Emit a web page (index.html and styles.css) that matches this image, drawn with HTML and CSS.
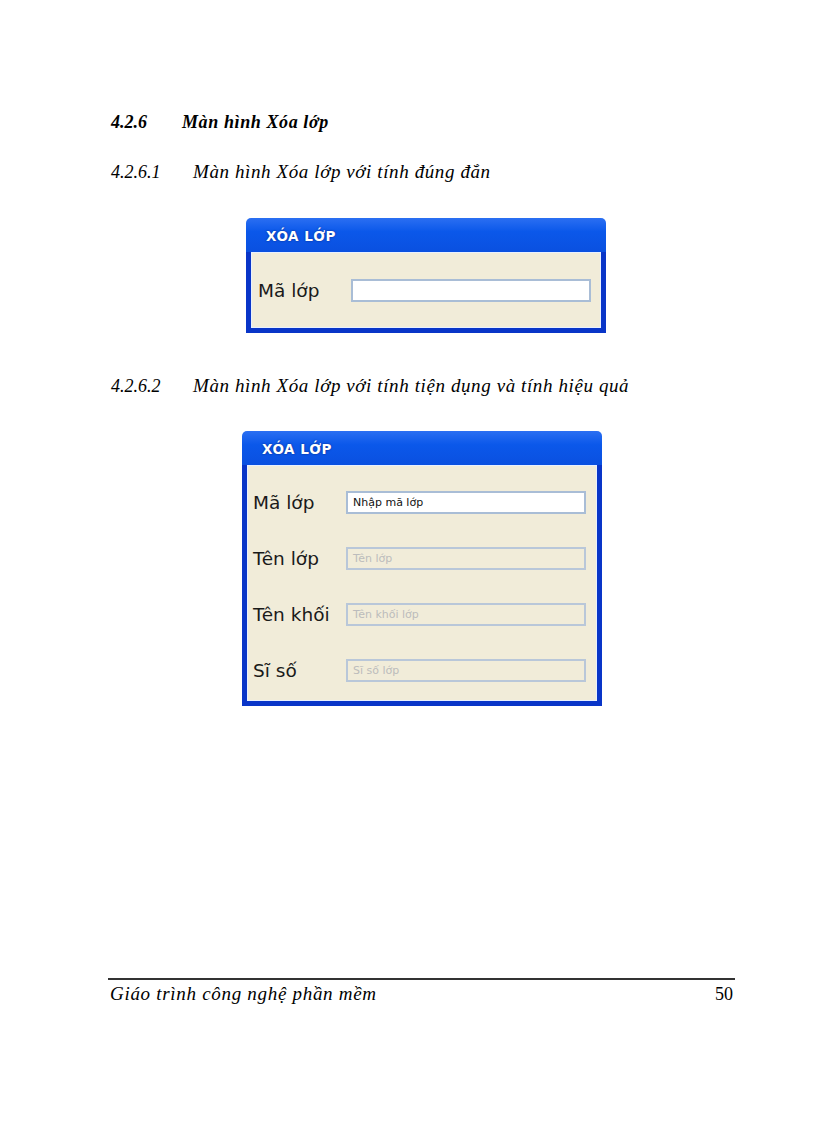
FILE: index.html
```html
<!DOCTYPE html>
<html lang="vi">
<head>
<meta charset="utf-8">
<title>Màn hình Xóa lớp</title>
<link rel="stylesheet" href="styles.css">
</head>
<body>
<div class="page">
  <h3 class="h3"><span class="num">4.2.6</span><span class="t3">Màn hình Xóa lớp</span></h3>
  <h4 class="h4"><span class="num4">4.2.6.1</span><span class="t4">Màn hình Xóa lớp với tính đúng đắn</span></h4>

  <div class="dialog dialog-a">
    <div class="titlebar">XÓA LỚP</div>
    <div class="body body-a">
      <div class="row">
        <span class="label">Mã lớp</span>
        <span class="field field-white"></span>
      </div>
    </div>
  </div>

  <h4 class="h4 h4-b"><span class="num4">4.2.6.2</span><span class="t4">Màn hình Xóa lớp với tính tiện dụng và tính hiệu quả</span></h4>

  <div class="dialog dialog-b">
    <div class="titlebar">XÓA LỚP</div>
    <div class="body body-b">
      <div class="row">
        <span class="label">Mã lớp</span>
        <span class="field field-white"><span class="val">Nhập mã lớp</span></span>
      </div>
      <div class="row">
        <span class="label">Tên lớp</span>
        <span class="field"><span class="ph">Tên lớp</span></span>
      </div>
      <div class="row">
        <span class="label">Tên khối</span>
        <span class="field"><span class="ph">Tên khối lớp</span></span>
      </div>
      <div class="row">
        <span class="label">Sĩ số</span>
        <span class="field"><span class="ph">Sĩ số lớp</span></span>
      </div>
    </div>
  </div>

  <div class="footer">
    <span class="ftext">Giáo trình công nghệ phần mềm</span>
    <span class="pnum">50</span>
  </div>
</div>
</body>
</html>
```
FILE: styles.css
```css
html, body {
  margin: 0;
  padding: 0;
  background: #ffffff;
}
.page {
  width: 816px;
  height: 1123px;
  box-sizing: border-box;
  padding: 112px 0 0 111px;
  font-family: "Liberation Serif", "Times New Roman", serif;
  color: #000;
}
.h3 {
  margin: 0;
  font-size: 18px;
  font-weight: bold;
  font-style: italic;
  line-height: 20px;
  display: flex;
}
.h3 .num { width: 71px; }
.h3 .t3 { letter-spacing: 0.6px; }
.h4 {
  margin: 29px 0 0 0;
  font-size: 18px;
  font-weight: normal;
  font-style: italic;
  line-height: 22px;
  display: flex;
}
.h4 .num4 { width: 82px; }
.h4 .t4 { font-size: 19px; letter-spacing: 0.6px; }
.h4-b { margin-top: 42px; }

.dialog {
  width: 360px;
  font-family: "DejaVu Sans", "Liberation Sans", sans-serif;
}
.dialog-a { margin: 35px 0 0 135px; }
.dialog-b { margin: 34px 0 0 131px; }

.titlebar {
  height: 34px;
  box-sizing: border-box;
  padding: 0 0 0 20px;
  background: linear-gradient(#2b6ff2, #0b58ea 40%, #0a50e0);
  border-radius: 5px 5px 0 0;
  color: #fff;
  font-size: 13.5px;
  font-weight: bold;
  line-height: 37px;
  letter-spacing: 0.5px;
  text-shadow: 0 0 2px rgba(0, 0, 60, 0.6);
}
.body {
  background: #f1ecd9;
  border: 5px solid #0935c8;
  border-top: 0;
  box-shadow: inset 1px 1px 0 #e8f0ff, inset -1px -1px 0 #e8f0ff;
  box-sizing: border-box;
}
.body-a {
  height: 81px;
  padding: 27px 0 0 7px;
}
.body-b {
  height: 241px;
  padding: 26px 0 0 6px;
  display: flex;
  flex-direction: column;
  gap: 33px;
}
.row {
  display: flex;
  align-items: center;
  height: 23px;
}
.label {
  width: 93px;
  font-size: 18.5px;
  color: #1a1a1a;
  white-space: nowrap;
}
.field {
  width: 240px;
  height: 23px;
  box-sizing: border-box;
  border: 2px solid #b9c7d9;
  background: transparent;
  display: flex;
  align-items: center;
  padding-left: 5px;
  font-size: 11px;
}
.field-white {
  background: #ffffff;
  border-color: #a9bdd6;
}
.val { color: #111; }
.ph { color: #bcbcbc; }

.footer {
  margin: 272px 0 0 -3px;
  width: 627px;
  border-top: 2px solid #333;
  display: flex;
  justify-content: space-between;
  padding: 3px 2px 0 2px;
  box-sizing: border-box;
  font-size: 18px;
  line-height: 22px;
}
.footer .ftext { font-style: italic; font-size: 19px; letter-spacing: 0.7px; }
.footer .pnum { font-style: normal; }
```
